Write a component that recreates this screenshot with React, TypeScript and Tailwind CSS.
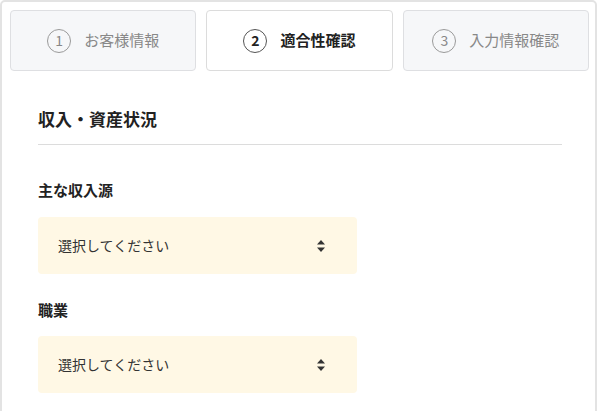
const steps = [
  { num: 1, label: "お客様情報", active: false },
  { num: 2, label: "適合性確認", active: true },
  { num: 3, label: "入力情報確認", active: false },
];

// Up/down sort arrows shown on the right of each select
function SortIcon() {
  return (
    <svg width="8" height="12" viewBox="0 0 8 12" className="shrink-0">
      <path d="M4 0 L8 4.5 L0 4.5 Z" fill="#333" />
      <path d="M4 12 L8 7.5 L0 7.5 Z" fill="#333" />
    </svg>
  );
}

function SelectBox() {
  return (
    <div className="flex h-[57px] w-[319px] items-center justify-between rounded-[4px] bg-[#fff8e5] pl-[20px] pr-[32px] text-[14px] text-[#333]">
      <span>選択してください</span>
      <SortIcon />
    </div>
  );
}

export default function App() {
  return (
    <div
      className="h-[411px] w-[600px] overflow-hidden bg-white"
      style={{ fontFamily: '"Noto Sans CJK JP", "Noto Sans", sans-serif' }}
    >
      <div className="h-[430px] w-[597px] rounded-[5px] border-2 border-[#e3e3e3] pl-2 pr-[6px] pt-2">
        {/* Step tabs */}
        <div className="grid grid-cols-3 gap-[10px]">
          {steps.map((step) => (
            <div
              key={step.num}
              className={`flex h-[61px] items-center justify-center gap-[13px] rounded-[4px] border ${
                step.active
                  ? "border-[#dcdcdc] bg-white"
                  : "border-[#dedfe2] bg-[#f6f7f9]"
              }`}
            >
              <span
                className={`flex h-[24px] w-[24px] items-center justify-center rounded-full border-[1.5px] text-[14px] ${
                  step.active
                    ? "border-[#555] font-bold text-[#222]"
                    : "border-[#9a9a9a] text-[#888]"
                }`}
              >
                {step.num}
              </span>
              <span
                className={`text-[15px] ${
                  step.active ? "font-bold text-[#222]" : "text-[#888]"
                }`}
              >
                {step.label}
              </span>
            </div>
          ))}
        </div>

        {/* Form section */}
        <div className="pl-[28px] pt-[36px]">
          <h2 className="w-[524px] border-b border-[#dcdcdc] pb-[13px] text-[17px] font-bold leading-[24px] text-[#222]">
            収入・資産状況
          </h2>

          <p className="mt-[35px] text-[15px] font-bold leading-[20px] text-[#222]">
            主な収入源
          </p>
          <div className="mt-[17px]">
            <SelectBox />
          </div>

          <p className="mt-[26px] text-[15px] font-bold leading-[20px] text-[#222]">
            職業
          </p>
          <div className="mt-[16px]">
            <SelectBox />
          </div>
        </div>
      </div>
    </div>
  );
}
